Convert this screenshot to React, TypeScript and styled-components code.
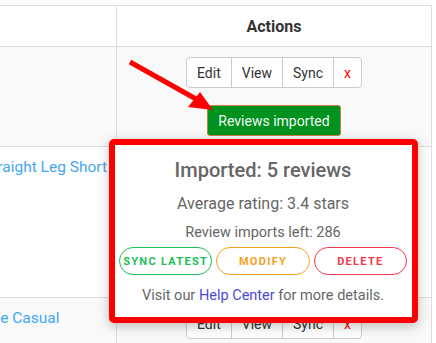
import React from 'react';
import styled, {createGlobalStyle} from 'styled-components';

const Global = createGlobalStyle`
  html, body {
    margin: 0;
    padding: 0;
    background: #fff;
    font-family: Roboto, "Noto Sans", sans-serif;
    color: #333;
    overflow: hidden;
  }
`;

const Page = styled.div`
  position: relative;
  width: 436px;
  height: 343px;
  overflow: hidden;
`;

const Table = styled.div`
  margin-left: -25px;
  padding-top: 5px;
  width: 457px;
`;

const Row = styled.div<{striped?: boolean; height?: number}>`
  display: grid;
  grid-template-columns: 142px 315px;
  border-bottom: 1px solid #ddd;
  background: ${p => (p.striped ? '#f9f9f9' : '#fff')};
  height: ${p => (p.height ? `${p.height}px` : 'auto')};
  &:first-child {
    border-top: 1px solid #ddd;
  }
`;

const Cell = styled.div`
  border-right: 1px solid #ddd;
  padding: 10px 8px;
  overflow: hidden;
`;

const HeadCell = styled(Cell)`
  height: 40px;
  padding: 0 8px;
  display: flex;
  align-items: center;
  justify-content: center;
  font-weight: 700;
  font-size: 16px;
  color: #333;
`;

const ActionCell = styled(Cell)`
  display: flex;
  flex-direction: column;
  align-items: center;
`;

const ProductLink = styled.a`
  display: block;
  color: #45a7f4;
  font-size: 15.5px;
  line-height: 20px;
  white-space: nowrap;
  text-decoration: none;
`;

const BtnGroup = styled.div`
  display: flex;
  height: 31px;
  border: 1px solid #ccc;
  border-radius: 4px;
  background: #fff;
  box-sizing: border-box;
`;

const GroupBtn = styled.button<{danger?: boolean}>`
  font-family: Roboto, sans-serif;
  font-size: 14px;
  background: transparent;
  border: none;
  border-left: 1px solid #ccc;
  padding: 0 10px;
  color: ${p => (p.danger ? '#f00' : '#333')};
  &:first-child {
    border-left: none;
  }
`;

const ImportedBtn = styled.button`
  margin-top: 17px;
  height: 31px;
  padding: 0 10px;
  background: #00921f;
  border: 1px solid #cf7d45;
  border-radius: 3px;
  color: #f4f8f4;
  font-family: Roboto, sans-serif;
  font-size: 14px;
`;

const Popover = styled.div`
  position: absolute;
  left: 109px;
  top: 139px;
  width: 309px;
  height: 184px;
  box-sizing: border-box;
  border: 6px solid #ff0000;
  border-radius: 5px;
  background: #fff;
  box-shadow: 0 3px 12px rgba(0, 0, 0, 0.25);
  display: flex;
  flex-direction: column;
  align-items: center;
  padding: 13px 5px 0 4px;
  color: #666;
  text-align: center;
`;

const Title = styled.div`
  font-size: 20px;
  font-weight: 500;
  line-height: 24px;
`;

const Rating = styled.div`
  margin-top: 11px;
  font-size: 16px;
  line-height: 22px;
`;

const Left = styled.div`
  margin-top: 8px;
  font-size: 14.5px;
  line-height: 20px;
`;

const PillRow = styled.div`
  margin-top: 4px;
  display: flex;
  gap: 4px;
  width: 100%;
`;

const Pill = styled.button<{tone: string}>`
  flex: 1;
  height: 28px;
  border-radius: 14px;
  border: 1px solid ${p => p.tone};
  background: #fff;
  color: ${p => p.tone};
  font-family: Roboto, sans-serif;
  font-size: 11px;
  font-weight: 700;
  letter-spacing: 1.3px;
  text-transform: uppercase;
  padding: 0;
`;

const Footer = styled.div`
  margin-top: 11px;
  font-size: 14.5px;
  line-height: 20px;
  a {
    color: #4b4bdb;
    text-decoration: none;
  }
`;

const Arrow = styled.svg`
  position: absolute;
  left: 0;
  top: 0;
`;

const Actions = () => (
  <BtnGroup>
    <GroupBtn>Edit</GroupBtn>
    <GroupBtn>View</GroupBtn>
    <GroupBtn>Sync</GroupBtn>
    <GroupBtn danger>x</GroupBtn>
  </BtnGroup>
);

export default function App() {
  return (
    <Page>
      <Global />
      <Table>
        <Row>
          <HeadCell />
          <HeadCell>Actions</HeadCell>
        </Row>
        <Row striped>
          <Cell />
          <ActionCell>
            <Actions />
            <ImportedBtn>Reviews imported</ImportedBtn>
          </ActionCell>
        </Row>
        <Row height={150}>
          <Cell>
            <ProductLink>Straight Leg Short</ProductLink>
          </Cell>
          <ActionCell />
        </Row>
        <Row striped height={80}>
          <Cell>
            <ProductLink>Lite Casual</ProductLink>
          </Cell>
          <ActionCell>
            <Actions />
          </ActionCell>
        </Row>
      </Table>

      <Arrow width="436" height="343" viewBox="0 0 436 343">
        <line x1="130" y1="62" x2="196" y2="99" stroke="#ff0000" strokeWidth="5" />
        <polygon points="213,110 188,107 200,92" fill="#ff0000" />
      </Arrow>

      <Popover>
        <Title>Imported: 5 reviews</Title>
        <Rating>Average rating: 3.4 stars</Rating>
        <Left>Review imports left: 286</Left>
        <PillRow>
          <Pill tone="#1cbf55">Sync latest</Pill>
          <Pill tone="#f6a01e">Modify</Pill>
          <Pill tone="#ef3a4a">Delete</Pill>
        </PillRow>
        <Footer>
          Visit our <a>Help Center</a> for more details.
        </Footer>
      </Popover>
    </Page>
  );
}
